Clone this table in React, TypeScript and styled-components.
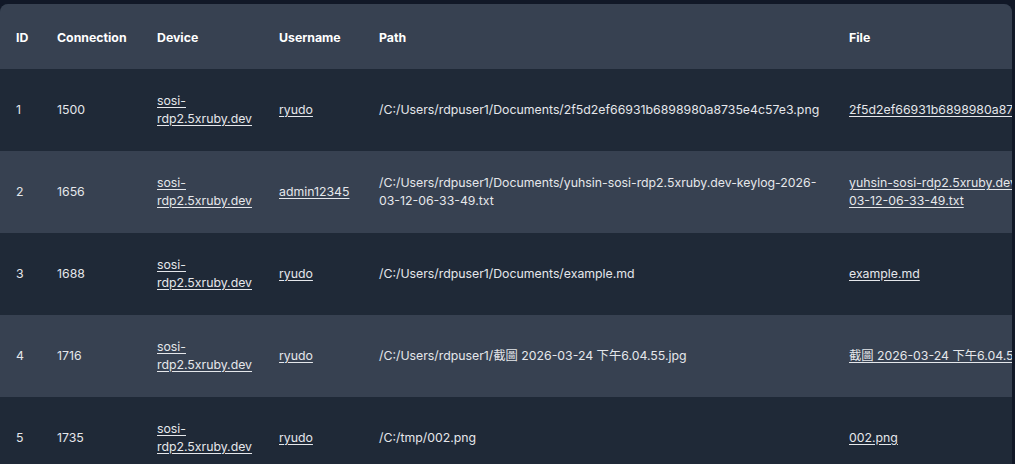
import React from "react";
import styled, { createGlobalStyle } from "styled-components";

const GlobalStyle = createGlobalStyle`
  html, body {
    margin: 0;
    padding: 0;
    background: #111827;
  }
  body {
    font-family: Inter, "Noto Sans CJK TC", "Noto Sans", sans-serif;
    -webkit-font-smoothing: antialiased;
  }
`;

const Page = styled.div`
  padding-top: 4px;
  width: 1012px;
`;

const TableWrap = styled.div`
  border-radius: 8px 8px 0 0;
  overflow: hidden;
  background: #1f2937;
`;

const Table = styled.table`
  border-collapse: collapse;
  table-layout: fixed;
  width: 1123px;
  font-size: 12.3px;
  line-height: 18px;
  color: #e5e7eb;
`;

const HeadCell = styled.th`
  text-align: left;
  font-weight: 700;
  color: #ffffff;
  padding: 25px 12px 22px 16px;
  vertical-align: middle;
`;

const HeadRow = styled.tr`
  background: #374151;
`;

const Row = styled.tr<{ $alt: boolean }>`
  background: ${(p) => (p.$alt ? "#374151" : "#1f2937")};
`;

const Cell = styled.td`
  padding: 23px 12px 23px 16px;
  vertical-align: middle;
  word-break: normal;
  overflow-wrap: normal;
`;

const Link = styled.a`
  color: #e5e7eb;
  text-decoration: underline;
  text-underline-offset: 2px;
  cursor: pointer;
`;

type Entry = {
  id: number;
  conn: number;
  device: string;
  user: string;
  path: string;
  file: string;
};

const rows: Entry[] = [
  {
    id: 1,
    conn: 1500,
    device: "sosi-rdp2.5xruby.dev",
    user: "ryudo",
    path: "/C:/Users/rdpuser1/Documents/2f5d2ef66931b6898980a8735e4c57e3.png",
    file: "2f5d2ef66931b6898980a8735e4c57e3.png",
  },
  {
    id: 2,
    conn: 1656,
    device: "sosi-rdp2.5xruby.dev",
    user: "admin12345",
    path: "/C:/Users/rdpuser1/Documents/yuhsin-sosi-rdp2.5xruby.dev-keylog-2026-03-12-06-33-49.txt",
    file: "yuhsin-sosi-rdp2.5xruby.dev-keylog-2026-03-12-06-33-49.txt",
  },
  {
    id: 3,
    conn: 1688,
    device: "sosi-rdp2.5xruby.dev",
    user: "ryudo",
    path: "/C:/Users/rdpuser1/Documents/example.md",
    file: "example.md",
  },
  {
    id: 4,
    conn: 1716,
    device: "sosi-rdp2.5xruby.dev",
    user: "ryudo",
    path: "/C:/Users/rdpuser1/截圖 2026-03-24 下午6.04.55.jpg",
    file: "截圖 2026-03-24 下午6.04.55.jpg",
  },
  {
    id: 5,
    conn: 1735,
    device: "sosi-rdp2.5xruby.dev",
    user: "ryudo",
    path: "/C:/tmp/002.png",
    file: "002.png",
  },
];

const widths = [41, 100, 122, 100, 470, 290];

export default function App() {
  return (
    <>
      <GlobalStyle />
      <Page>
        <TableWrap>
          <Table>
            <colgroup>
              {widths.map((w, i) => (
                <col key={i} style={{ width: w }} />
              ))}
            </colgroup>
            <thead>
              <HeadRow>
                <HeadCell>ID</HeadCell>
                <HeadCell>Connection</HeadCell>
                <HeadCell>Device</HeadCell>
                <HeadCell>Username</HeadCell>
                <HeadCell>Path</HeadCell>
                <HeadCell>File</HeadCell>
              </HeadRow>
            </thead>
            <tbody>
              {rows.map((r, i) => (
                <Row key={r.id} $alt={i % 2 === 1}>
                  <Cell>{r.id}</Cell>
                  <Cell>{r.conn}</Cell>
                  <Cell>
                    <Link>{r.device}</Link>
                  </Cell>
                  <Cell>
                    <Link>{r.user}</Link>
                  </Cell>
                  <Cell>{r.path}</Cell>
                  <Cell>
                    <Link>{r.file}</Link>
                  </Cell>
                </Row>
              ))}
            </tbody>
          </Table>
        </TableWrap>
      </Page>
    </>
  );
}
